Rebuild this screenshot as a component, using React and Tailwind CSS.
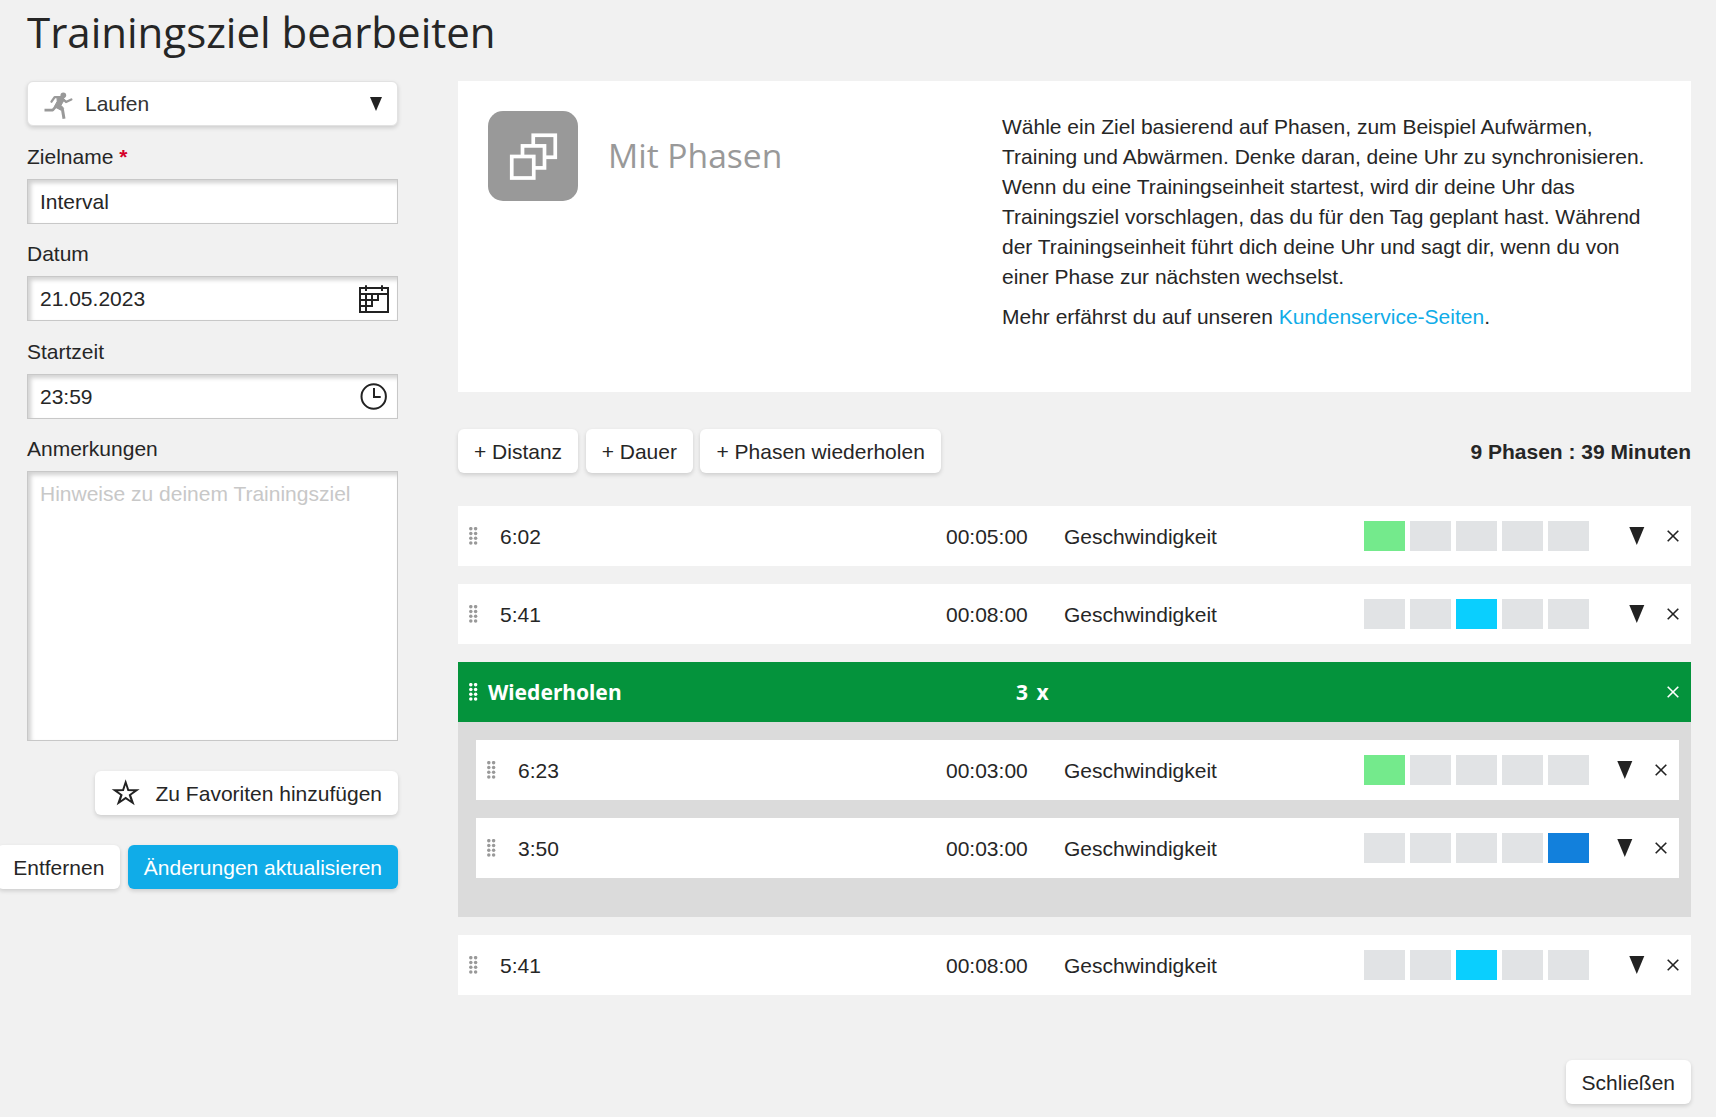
import React from "react";

const ZONE_OFF = "bg-[#e1e3e5]";

function RunnerIcon() {
  return (
    <svg className="h-[27px] w-[30px]" viewBox="130 277 90 81" fill="none" stroke="#999" strokeWidth="7" strokeLinecap="round" strokeLinejoin="round">
      <circle cx="188" cy="287" r="8.500" fill="#999" stroke="none" />
      <path d="M152.500 306 L162 292.500 L180 292.500" />
      <path d="M187 298 L196 307 L212 299.500" />
      <path d="M170 291 L184 292 L191 300 L181 317 L189 326 L180 331 L161 321 L169 306 Z" fill="#999" strokeWidth="3" />
      <path d="M131.500 331.500 L156 331.500 L168 318" strokeLinecap="butt" strokeWidth="8" />
      <path d="M172 320 L185.500 330 L190 357" strokeLinecap="butt" strokeWidth="9" />
    </svg>
  );
}

function CalendarIcon() {
  return (
    <svg className="h-7 w-[30px]" viewBox="1077 162 90 84" fill="none" stroke="#222" strokeWidth="6">
      <rect x="1080" y="171" width="84" height="72" />
      <path d="M1080 189H1164M1098 163V180M1146 163V180M1098 189V243M1080 207H1134V189M1080 225H1116V189" />
    </svg>
  );
}

function ClockIcon() {
  return (
    <svg className="h-[27px] w-[27px]" viewBox="0 0 27 27" fill="none" stroke="#222" strokeWidth="2">
      <circle cx="13.700" cy="13.500" r="12.200" />
      <path d="M14 5V14H20.700" />
    </svg>
  );
}

function StarIcon() {
  return (
    <svg className="mb-1 h-[27px] w-[29px]" viewBox="-2 -1 87 81" fill="#222">
      <path
        fillRule="evenodd"
        d="M42 0L52 29.500L84 29.500L58.500 48L69 78L42 60L15 78L25.500 48L0 29.500L32 29.500ZM42 18L36.500 35L18.500 35.500L33 46L27.500 62.500L42 52.500L56.500 62.500L51 46L65.500 35.500L47.500 35Z"
      />
    </svg>
  );
}

function PhasesIcon() {
  return (
    <svg className="h-[90px] w-[90px]" viewBox="0 0 90 90" fill="#999" stroke="#fff" strokeWidth="3.700">
      <rect x="45.250" y="24.250" width="22" height="22" />
      <rect x="34.500" y="34.900" width="22" height="22" />
      <rect x="23.750" y="45.500" width="22" height="21.500" />
    </svg>
  );
}

function DragHandle({ className = "text-[#999]" }) {
  return (
    <svg className={"h-[18px] w-[9px] shrink-0 " + className} viewBox="0 0 9 18" fill="currentColor">
      {[1.7, 6.5, 11.3, 16.1].map((y) => (
        <g key={y}>
          <circle cx="1.800" cy={y} r="1.750" />
          <circle cx="6.600" cy={y} r="1.750" />
        </g>
      ))}
    </svg>
  );
}

function CloseIcon({ className = "text-[#222]" }) {
  return (
    <svg className={"h-3 w-3 shrink-0 " + className} viewBox="0 0 12 12" fill="none" stroke="currentColor" strokeWidth="1.600">
      <path d="M0.700 0.700L11.300 11.300M11.300 0.700L0.700 11.300" />
    </svg>
  );
}

function Button({ children, className = "bg-white text-[#262626]" }) {
  return (
    <button className={"flex h-11 shrink-0 items-center rounded-[6px] px-4 pt-0.5 whitespace-nowrap shadow-[0_2px_4px_rgba(0,0,0,0.15)] " + className}>
      {children}
    </button>
  );
}

function Field({ label, required, children }) {
  return (
    <div className="mt-4">
      <label className="block">
        {label}
        {required && <span className="font-bold text-[#d6002a]"> *</span>}
      </label>
      {children}
    </div>
  );
}

function Box({ value, icon }) {
  return (
    <div className="mt-[7px] flex h-[45px] items-center justify-between border border-[#c8c8c8] bg-white pr-2 pl-3 shadow-[inset_3px_3px_4px_rgba(0,0,0,0.18)]">
      <span>{value}</span>
      {icon}
    </div>
  );
}

function Phase({ name, time, zone, color, nested }) {
  return (
    <div className="flex h-[60px] items-center bg-white pl-[11px]">
      <DragHandle />
      <span className="mt-0.5 ml-[22px] flex-1">{name}</span>
      <span className="mt-0.5 w-[118px]">{time}</span>
      <span className="mt-0.5 w-[300px]">Geschwindigkeit</span>
      <div className="flex gap-[5px]">
        {[0, 1, 2, 3, 4].map((i) => (
          <div key={i} className={"h-[30px] w-[41px] " + (i === zone ? color : ZONE_OFF)} />
        ))}
      </div>
      <div className={"flex items-center pr-3 " + (nested ? "ml-7" : "ml-10")}>
        <svg className="h-[18px] w-4" viewBox="0 0 16 18">
          <path d="M0.300 0H15.300L7.800 18Z" fill="#222" />
        </svg>
        <CloseIcon className="ml-[22px] text-[#222]" />
      </div>
    </div>
  );
}

export default function App() {
  return (
    <div className="h-[1117px] w-[1716px] overflow-hidden bg-[#f1f1f1] pl-[27px] font-['Liberation_Sans',Arial,sans-serif] text-[21px] leading-[30px] text-[#262626]">
      <h1 className="h-[81px] pt-0.5 font-['Open_Sans',sans-serif] text-[42px] leading-[60px]">Trainingsziel bearbeiten</h1>
      <div className="flex">
        <aside className="w-[371px] shrink-0">
          <div className="flex h-[45px] items-center rounded-[6px] border border-[#e2e2e2] bg-white pr-[15px] pl-4 shadow-[0_2px_4px_rgba(0,0,0,0.15)]">
            <div className="mt-1">
              <RunnerIcon />
            </div>
            <span className="ml-[11px] flex-1 text-[#333]">Laufen</span>
            <svg className="h-[14px] w-3" viewBox="0 0 12 14">
              <path d="M0 0H12L6 14Z" fill="#222" />
            </svg>
          </div>
          <Field label="Zielname" required>
            <Box value="Interval" />
          </Field>
          <div className="-mt-px">
            <Field label="Datum">
              <Box value="21.05.2023" icon={<CalendarIcon />} />
            </Field>
          </div>
          <Field label="Startzeit">
            <Box value="23:59" icon={<div className="mr-0.5"><ClockIcon /></div>} />
          </Field>
          <div className="-mt-px">
            <Field label="Anmerkungen">
              <div className="mt-[7px] h-[270px] border border-[#c8c8c8] bg-white px-3 pt-[7px] text-[#c8c8c8] shadow-[inset_3px_3px_4px_rgba(0,0,0,0.18)]">
                Hinweise zu deinem Trainingsziel
              </div>
            </Field>
          </div>
          <div className="mt-[30px] flex justify-end">
            <Button>
              <StarIcon />
              <span className="ml-4">Zu Favoriten hinzufügen</span>
            </Button>
          </div>
          <div className="mt-[30px] flex justify-end gap-[7.500px]">
            <Button>Entfernen</Button>
            <Button className="bg-[#10ace8] text-white">Änderungen aktualisieren</Button>
          </div>
        </aside>

        <main className="ml-[60px] w-[1233px] shrink-0">
          <section className="flex h-[311px] bg-white pt-[30px] pl-[30px]">
            <div className="h-[90px] w-[90px] rounded-[15px] bg-[#999]">
              <PhasesIcon />
            </div>
            <h2 className="ml-[30px] w-[394px] pt-5 font-['Open_Sans',sans-serif] text-[33.600px] leading-[48px] text-[#999]">Mit Phasen</h2>
            <div className="pt-px whitespace-nowrap">
              <p>
                Wähle ein Ziel basierend auf Phasen, zum Beispiel Aufwärmen,
                <br />
                Training und Abwärmen. Denke daran, deine Uhr zu synchronisieren.
                <br />
                Wenn du eine Trainingseinheit startest, wird dir deine Uhr das
                <br />
                Trainingsziel vorschlagen, das du für den Tag geplant hast. Während
                <br />
                der Trainingseinheit führt dich deine Uhr und sagt dir, wenn du von
                <br />
                einer Phase zur nächsten wechselst.
              </p>
              <p className="mt-2.5">
                Mehr erfährst du auf unseren <a className="text-[#10ace8]">Kundenservice-Seiten</a>.
              </p>
            </div>
          </section>

          <div className="mt-[37px] flex items-center">
            <div className="flex flex-1 gap-[7.500px]">
              <Button>+ Distanz</Button>
              <Button>+ Dauer</Button>
              <Button>+ Phasen wiederholen</Button>
            </div>
            <strong className="mt-0.5">9 Phasen : 39 Minuten</strong>
          </div>

          <div className="mt-[33px] flex flex-col gap-[18px]">
            <Phase name="6:02" time="00:05:00" zone={0} color="bg-[#74ea8c]" />
            <Phase name="5:41" time="00:08:00" zone={2} color="bg-[#0acffe]" />
            <div>
              <div className="flex h-[60px] items-center bg-[#04933c] pr-3 pl-[11px] font-['Noto_Sans',sans-serif] font-bold text-white">
                <DragHandle className="text-white" />
                <span className="ml-2.5 w-[528px]">Wiederholen</span>
                <span className="flex-1 [word-spacing:3px]">3 x</span>
                <CloseIcon className="text-white" />
              </div>
              <div className="flex h-[195px] flex-col gap-[18px] bg-[#dbdbdb] pt-[18px] pr-3 pl-[18px]">
                <Phase nested name="6:23" time="00:03:00" zone={0} color="bg-[#74ea8c]" />
                <Phase nested name="3:50" time="00:03:00" zone={4} color="bg-[#1280dc]" />
              </div>
            </div>
            <Phase name="5:41" time="00:08:00" zone={2} color="bg-[#0acffe]" />
          </div>

          <div className="mt-[65px] flex justify-end">
            <Button>Schließen</Button>
          </div>
        </main>
      </div>
    </div>
  );
}
